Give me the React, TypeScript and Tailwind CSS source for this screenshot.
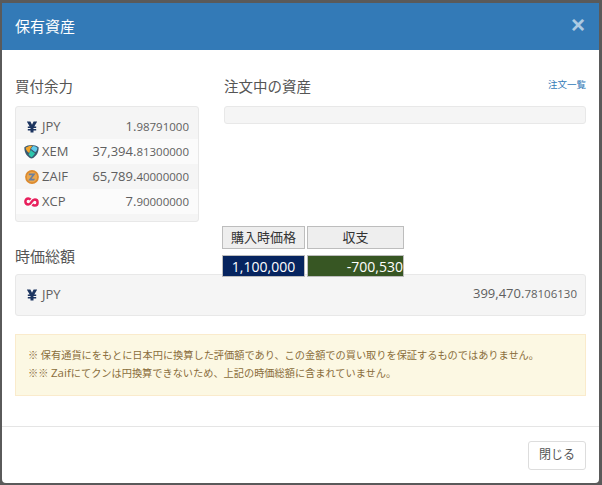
import React from "react";

const jp = "[font-family:'Open_Sans','Noto_Sans_CJK_JP',sans-serif]";

const YenIcon = () => (
  <svg viewBox="0 0 12 12" className="w-[12px] h-[12px]">
    <path
      d="M0.8 0.6H4.4L6 3.7L7.6 0.6H11.2L8.3 5.6H10.2V7H7.5V8H10.2V9.4H7.5V11.6H4.5V9.4H1.8V8H4.5V7H1.8V5.6H3.7Z"
      fill="#1d3560"
    />
  </svg>
);

const XemIcon = () => (
  <svg viewBox="0 0 15 15" className="w-[15px] h-[15px]">
    <path d="M0.4 3.2C4.4 0.2 10.6 0.2 14.6 3.2C15 8 12.2 13 7.5 14.6C2.8 13 0 8 0.4 3.2Z" fill="#3a5a70" />
    <path d="M1.6 3.8C4.4 1.8 7 1.4 8.6 1.8C6.6 3.4 5.8 6 5.6 9C3.6 8.2 2 6.2 1.6 3.8Z" fill="#f2a52c" />
    <path d="M9.4 1.9C10.8 2 12.2 2.8 13.4 3.7C13.3 5.6 12.6 7 11.4 8C10 7.6 8.6 6 7 5C7.6 3.6 8.4 2.4 9.4 1.9Z" fill="#62cbec" />
    <path d="M6.6 6C8 7 9.4 8.6 11 9C10.2 11 8.8 12.6 7.6 13.2C6 12.6 4.8 11.2 4.6 10C5.8 9.2 6.2 7.6 6.6 6Z" fill="#2cc7ad" />
  </svg>
);

const ZaifIcon = () => (
  <svg viewBox="0 0 14 14" className="w-[14px] h-[14px]">
    <circle cx="7" cy="7" r="6.9" fill="#dc8a2e" />
    <circle cx="7" cy="7" r="5.2" fill="#eba74e" />
    <path d="M3.8 3.6H10.6L6.6 8.7H10L9 10.4H3.2L7.2 5.3H3.8Z" fill="#6b7f9e" />
  </svg>
);

const XcpIcon = () => (
  <svg viewBox="0 0 15 10" className="w-[15px] h-[10px]" fill="none">
    <path
      d="M6.6 2.6C6 1.9 5.2 1.5 4.2 1.5C2.6 1.5 1.4 2.8 1.4 4.6C1.4 6.3 2.6 7.5 4.2 7.5C6 7.5 6.8 6 7.5 5C8.2 4 9 2.5 10.8 2.5C12.4 2.5 13.6 3.7 13.6 5.4C13.6 7.2 12.4 8.5 10.8 8.5C9.8 8.5 9 8.1 8.4 7.4"
      stroke="#e81f5c"
      strokeWidth="2.5"
    />
  </svg>
);

const rows = [
  { code: "JPY", icon: <YenIcon />, whole: "1.", frac: "98791000", bg: "" },
  { code: "XEM", icon: <XemIcon />, whole: "37,394.", frac: "81300000", bg: "bg-[#fbfbfb]" },
  { code: "ZAIF", icon: <ZaifIcon />, whole: "65,789.", frac: "40000000", bg: "" },
  { code: "XCP", icon: <XcpIcon />, whole: "7.", frac: "90000000", bg: "bg-[#fbfbfb]" },
];

export default function App() {
  return (
    <div className={`w-[602px] h-[485px] bg-[#5a5a5a] pt-[3px] pl-[2px] pr-[3px] pb-[2px] text-[#5f5f5f] ${jp}`}>
      <div className="h-full flex flex-col bg-white rounded-b-[4px] overflow-hidden">
        <div className="h-[47px] shrink-0 bg-[#337ab7] flex items-center justify-between pl-[13px] pr-[14px]">
          <h4 className="text-[15px] text-white -mt-px">保有資産</h4>
          <span className="text-[24px] leading-none font-bold text-white opacity-60 -mt-[4px] [font-family:'Liberation_Sans',sans-serif]">×</span>
        </div>

        <div className="flex-1 pl-[13px] pr-[13px]">
          <div className="flex pt-[27px]">
            <div className="w-[184px] shrink-0">
              <h3 className="text-[14.5px] leading-[22px] h-[29px] text-[#555] -mt-px mb-px">買付余力</h3>
              <div className="bg-[#f5f5f5] border border-[#e8e8e8] rounded-[3px] pt-[7px] pb-[7px]">
                {rows.map((r) => (
                  <div key={r.code} className={`h-[25px] flex items-center justify-between pl-[8px] pr-[9px] ${r.bg}`}>
                    <div className="flex items-center gap-[3px] text-[13px]">
                      <span className="w-[15px] flex justify-center">{r.icon}</span>
                      <span>{r.code}</span>
                    </div>
                    <div className="text-[13px]">
                      {r.whole}
                      <span className="text-[11.5px]">{r.frac}</span>
                    </div>
                  </div>
                ))}
              </div>
            </div>

            <div className="flex-1 ml-[25px]">
              <div className="h-[29px] flex items-start justify-between -mt-px mb-px">
                <h3 className="text-[14.5px] leading-[22px] text-[#555]">注文中の資産</h3>
                <a className="text-[9.5px] leading-[14px] text-[#337ab7] mt-[2px]">注文一覧</a>
              </div>
              <div className="h-[18px] bg-[#f5f5f5] border border-[#e8e8e8] rounded-[3px]" />
            </div>
          </div>

          <div className="flex items-end mt-[4px] -mb-[3px] relative z-10">
            <h3 className="w-[207px] text-[15px] leading-[22px] mb-[10px] text-[#555]">時価総額</h3>
            <div className="grid grid-cols-[83px_97px] gap-x-[2px] gap-y-[6px]">
              <div className="h-[23px] flex items-center justify-center bg-[#eeeeee] border border-[#bdbdbd] text-[13px] text-[#333]">購入時価格</div>
              <div className="h-[23px] flex items-center justify-center bg-[#eeeeee] border border-[#bdbdbd] text-[13px] text-[#333]">収支</div>
              <div className="h-[22px] flex items-center justify-center bg-[#06245f] border border-[#bdbdbd] text-[14px] text-white">1,100,000</div>
              <div className="h-[22px] flex items-center justify-end bg-[#375623] border border-[#bdbdbd] text-[14px] text-white">-700,530</div>
            </div>
          </div>

          <div className="h-[42px] bg-[#f5f5f5] border border-[#e8e8e8] rounded-[3px] flex items-center justify-between pl-[10px] pr-[8px]">
            <div className="flex items-center gap-[4px] text-[13px]">
              <YenIcon />
              <span>JPY</span>
            </div>
            <div className="text-[13px] -mt-[3px]">
              399,470.<span className="text-[11.5px]">78106130</span>
            </div>
          </div>

          <div className="mt-[18px] h-[62px] bg-[#fcf8e3] border border-[#faebcc] flex flex-col justify-center pl-[12px] pb-[2px] text-[10.2px] leading-[18px] text-[#8a6d3b]">
            <p>※ 保有通貨にをもとに日本円に換算した評価額であり、この金額での買い取りを保証するものではありません。</p>
            <p>※※ <span className="text-[11.5px]">Zaif</span>にてクンは円換算できないため、上記の時価総額に含まれていません。</p>
          </div>
        </div>

        <div className="h-[57px] shrink-0 border-t border-[#e5e5e5] flex items-center justify-end pr-[13px]">
          <button className="w-[58px] h-[29px] bg-white border border-[#dddddd] rounded-[3px] text-[12px] text-[#555]">閉じる</button>
        </div>
      </div>
    </div>
  );
}
